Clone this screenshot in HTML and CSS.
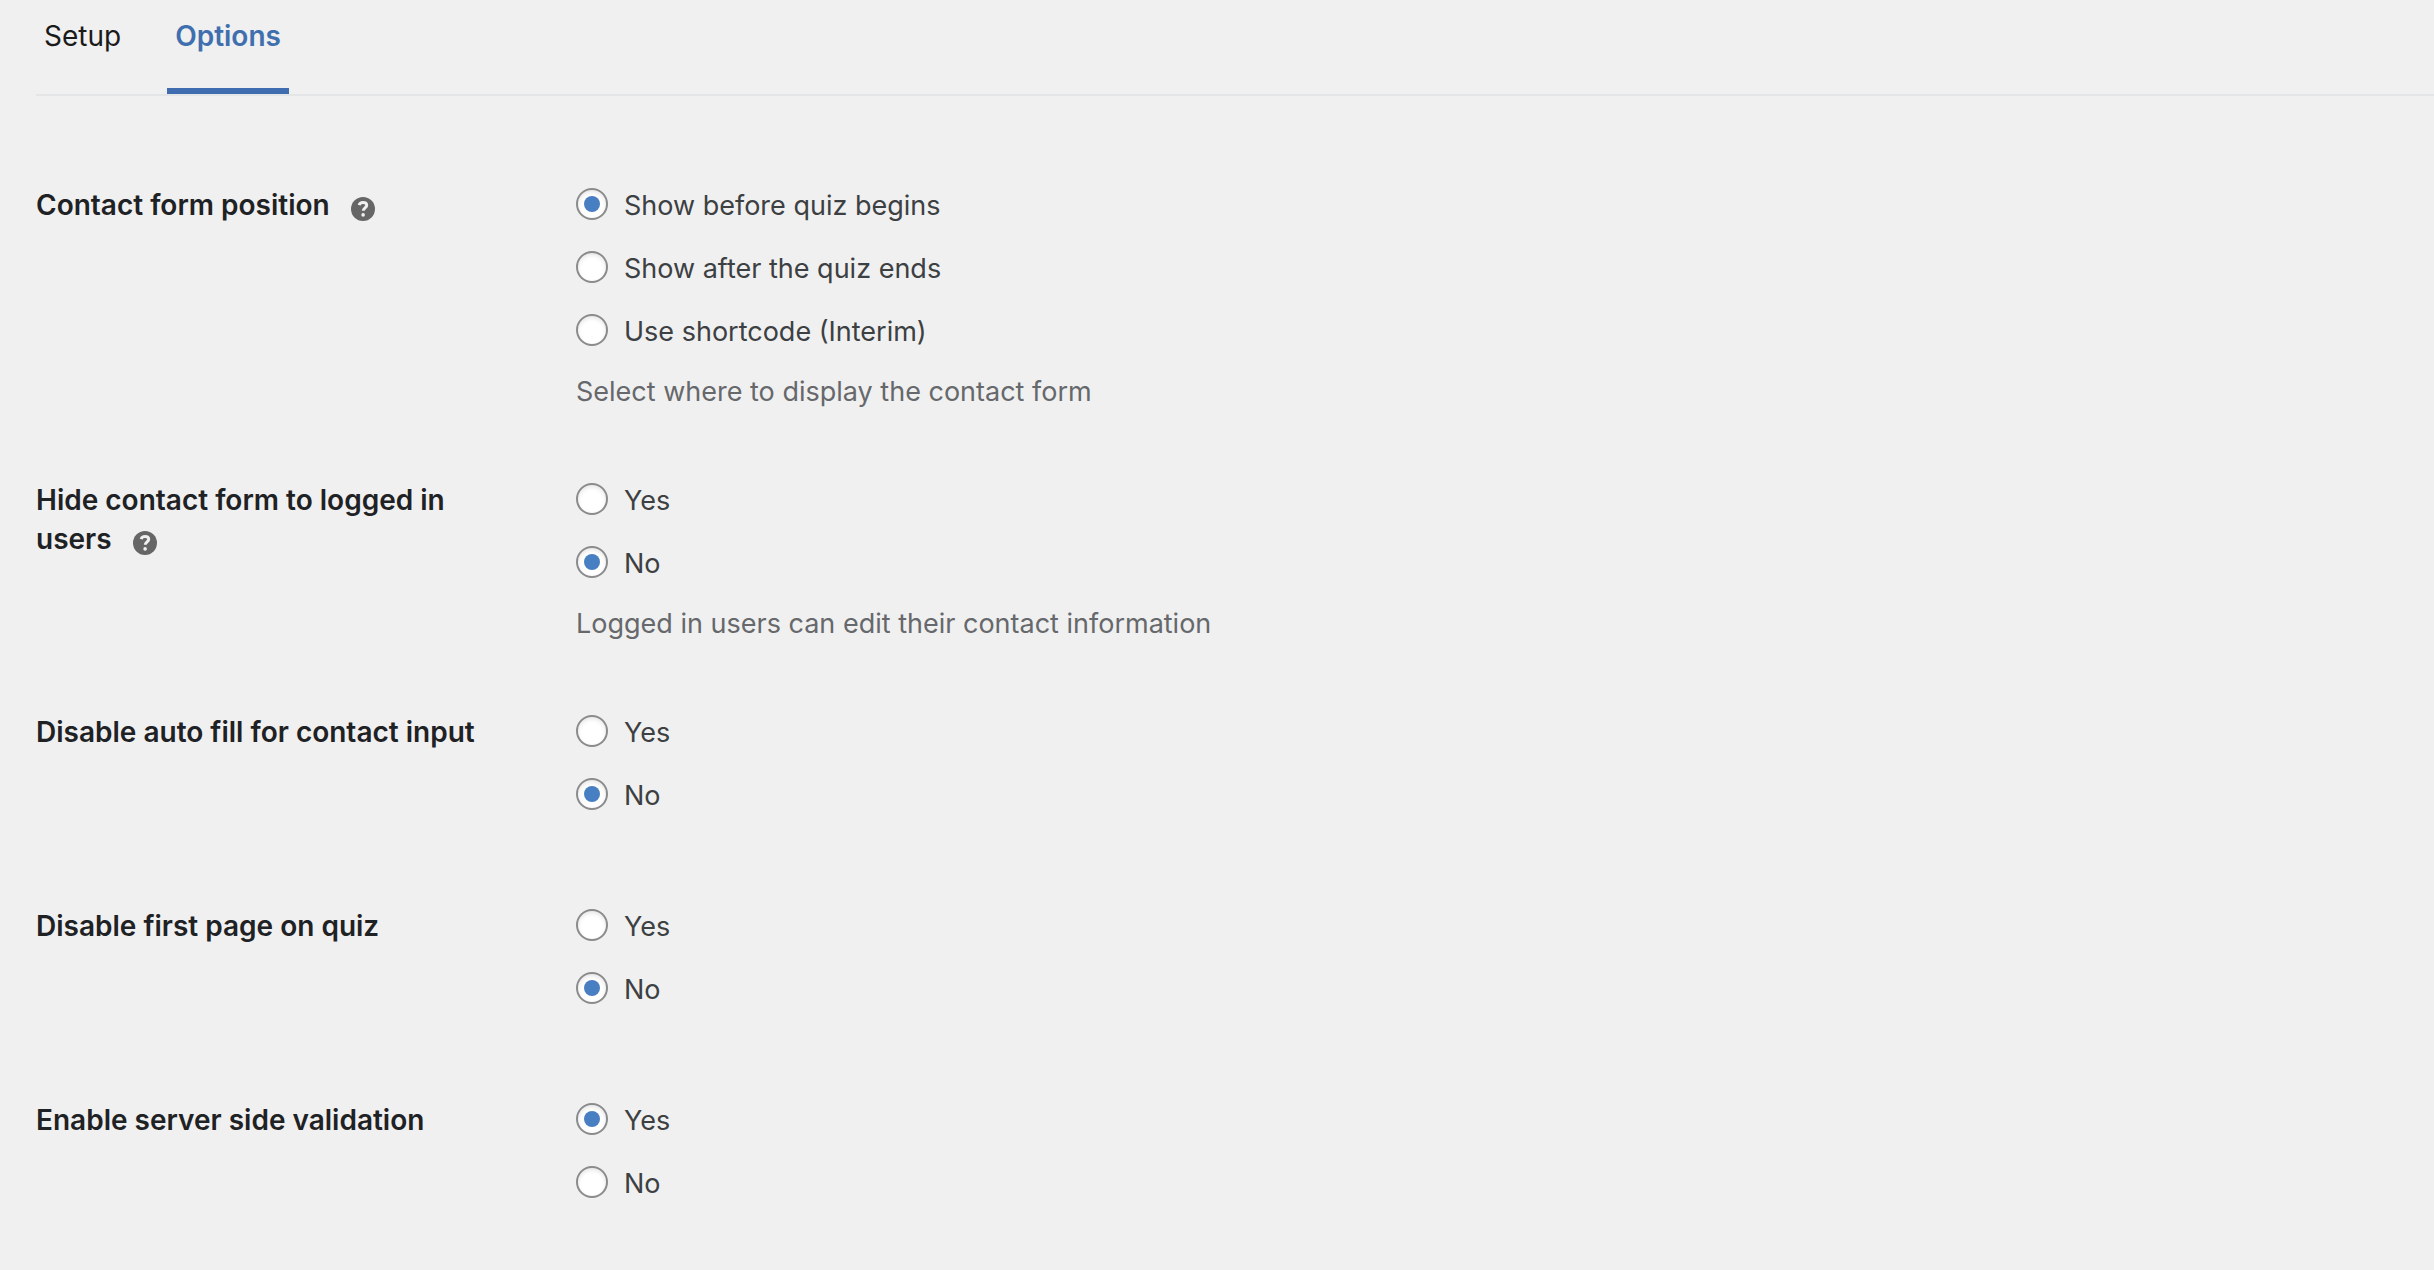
FILE: index.html
```html
<!DOCTYPE html>
<html lang="en">
<head>
<meta charset="UTF-8">
<meta name="viewport" content="width=device-width, initial-scale=1.0">
<title>Contact Options</title>
<link rel="stylesheet" href="styles.css">
</head>
<body>

<nav class="tabs">
  <a class="tab" href="#setup">Setup</a>
  <a class="tab active" href="#options" aria-current="page">Options</a>
</nav>

<form class="options-form">
  <div class="option-row" role="radiogroup" aria-labelledby="label-position">
    <div class="option-label">
      <span id="label-position">Contact form position</span>
      <button class="help" type="button" aria-label="Help">
        <svg viewBox="0 0 24 24"><circle cx="12" cy="12" r="12"/><path d="M8.2 8.1C8.7 6.2 10.1 5.5 12 5.5c2.2 0 3.7 1 3.7 2.8 0 2.5-3.4 2.6-3.4 5.4"/><circle class="dot" cx="12.1" cy="17.9" r="1.8"/></svg>
      </button>
    </div>
    <div class="option-field">
      <div class="choices">
        <label class="choice"><input type="radio" name="position" value="before" checked>Show before quiz begins</label>
        <label class="choice"><input type="radio" name="position" value="after">Show after the quiz ends</label>
        <label class="choice"><input type="radio" name="position" value="shortcode">Use shortcode (Interim)</label>
      </div>
      <p class="description">Select where to display the contact form</p>
    </div>
  </div>

  <div class="option-row" role="radiogroup" aria-labelledby="label-hide">
    <div class="option-label">
      <span id="label-hide">Hide contact form to logged in users</span>
      <button class="help" type="button" aria-label="Help">
        <svg viewBox="0 0 24 24"><circle cx="12" cy="12" r="12"/><path d="M8.2 8.1C8.7 6.2 10.1 5.5 12 5.5c2.2 0 3.7 1 3.7 2.8 0 2.5-3.4 2.6-3.4 5.4"/><circle class="dot" cx="12.1" cy="17.9" r="1.8"/></svg>
      </button>
    </div>
    <div class="option-field">
      <div class="choices">
        <label class="choice"><input type="radio" name="hide" value="1">Yes</label>
        <label class="choice"><input type="radio" name="hide" value="0" checked>No</label>
      </div>
      <p class="description">Logged in users can edit their contact information</p>
    </div>
  </div>

  <div class="option-row" role="radiogroup" aria-labelledby="label-autofill">
    <div class="option-label"><span id="label-autofill">Disable auto fill for contact input</span></div>
    <div class="option-field">
      <div class="choices">
        <label class="choice"><input type="radio" name="autofill" value="1">Yes</label>
        <label class="choice"><input type="radio" name="autofill" value="0" checked>No</label>
      </div>
    </div>
  </div>

  <div class="option-row" role="radiogroup" aria-labelledby="label-first-page">
    <div class="option-label"><span id="label-first-page">Disable first page on quiz</span></div>
    <div class="option-field">
      <div class="choices">
        <label class="choice"><input type="radio" name="first-page" value="1">Yes</label>
        <label class="choice"><input type="radio" name="first-page" value="0" checked>No</label>
      </div>
    </div>
  </div>

  <div class="option-row" role="radiogroup" aria-labelledby="label-validation">
    <div class="option-label"><span id="label-validation">Enable server side validation</span></div>
    <div class="option-field">
      <div class="choices">
        <label class="choice"><input type="radio" name="validation" value="1" checked>Yes</label>
        <label class="choice"><input type="radio" name="validation" value="0">No</label>
      </div>
    </div>
  </div>
</form>

</body>
</html>
```
FILE: styles.css
```css
* {
  box-sizing: border-box;
}
body {
  font-family: Inter, sans-serif;
  font-size: 28px;
  line-height: 39px;
  background-color: #f0f0f0;
  color: #3c4043;
  margin: 0;
  padding-left: 36px;
}
.tabs {
  display: flex;
  gap: 38px;
  padding-top: 17px;
  border-bottom: 2px solid #e4e5e7;
}
.tab {
  padding: 0 8px 32px;
  border-bottom: 6px solid transparent;
  color: #1a1a1a;
  text-decoration: none;
}
.tab.active {
  border-bottom-color: #3f6db0;
  color: #3f6fae;
  font-weight: 600;
}
.options-form {
  padding-top: 90px;
}
.option-row {
  display: grid;
  grid-template-columns: 480px 1fr;
  column-gap: 60px;
  padding-bottom: 70px;
}
.option-row:last-child {
  padding-bottom: 0;
}
.option-label {
  color: #1f2225;
  font-weight: 600;
}
.option-field {
  font-size: 27px;
}
.choices {
  display: flex;
  flex-direction: column;
  align-items: flex-start;
  gap: 24px;
  padding-bottom: 22px;
}
.choice {
  display: flex;
  gap: 16px;
}
.choice input {
  appearance: none;
  display: grid;
  place-items: center;
  width: 32px;
  height: 32px;
  margin: 2px 0 0;
  background-color: #fff;
  border: 2px solid #8a8b8d;
  border-radius: 50%;
  box-shadow: inset 0 2px 4px rgba(0,0,0,0.1);
}
.choice input:checked::before {
  content: "";
  width: 16px;
  height: 16px;
  border-radius: 50%;
  background-color: #487fc2;
}
.description {
  margin: 0;
  line-height: 38px;
  color: #66686b;
}
.help {
  width: 24px;
  height: 24px;
  margin-left: 14px;
  padding: 0;
  background: none;
  border: none;
  vertical-align: -6px;
  cursor: pointer;
}
.help svg {
  display: block;
  fill: #666;
}
.help path {
  fill: none;
  stroke: #f0f0f0;
  stroke-width: 3;
}
.help .dot {
  fill: #f0f0f0;
}
```
